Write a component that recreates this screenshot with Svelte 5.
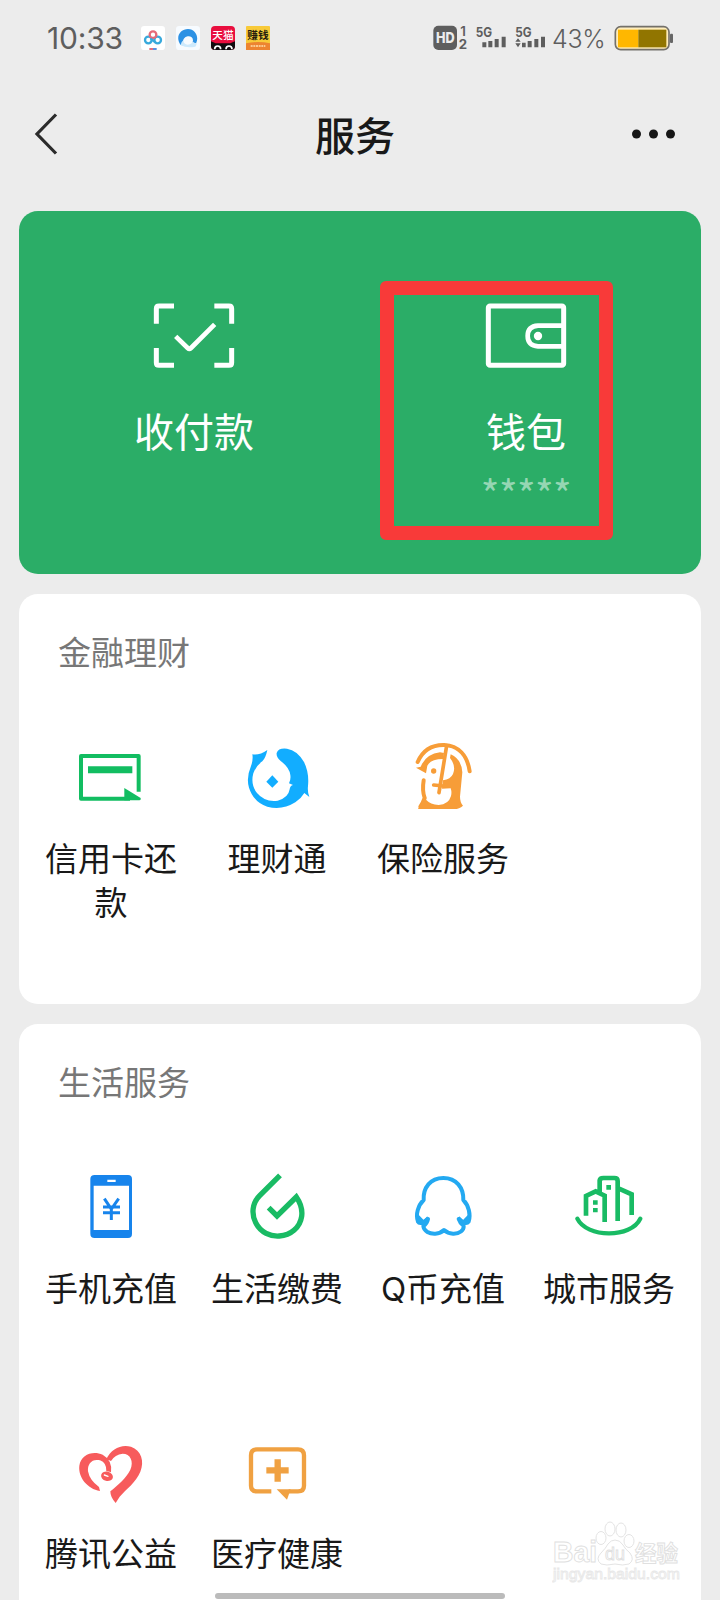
<script>
  const finance = [
    { id: 'card', label: '信用卡还款', box: '135 63 216 216' },
    { id: 'fish', label: '理财通', box: '633 63 216 216' },
    { id: 'insure', label: '保险服务', box: '171 63 216 216' }
  ];
  const life = [
    { id: 'phone', label: '手机充值', box: '135 63 216 216' },
    { id: 'drop', label: '生活缴费', box: '633 63 216 216' },
    { id: 'penguin', label: 'Q币充值', box: '171 63 216 216' },
    { id: 'city', label: '城市服务', box: '669 63 216 216' },
    { id: 'heart', label: '腾讯公益', box: '135 48 216 216' },
    { id: 'medical', label: '医疗健康', box: '633 48 216 216' }
  ];
</script>

{#snippet glyph(item)}
  <svg class="icon" viewBox={item.box} fill="none">
    {#if item.id === 'card'}
      <path d="M326 215V108H153V236H300" stroke="#12bd61" stroke-width="12" stroke-linejoin="round" />
      <path d="M174 139H307V160H174Z" fill="#12bd61" />
      <path d="M283 204L332 234V238Q332 241 328 241H283Z" fill="#12bd61" />
    {:else if item.id === 'fish'}
      <path fill="#12adff" d="M712 90Q688 107 667 103Q670 119 663 138Q648 173 657 203Q671 247 712 260Q756 272 796 247Q813 236 823 219L838 231Q832 217 834 198Q838 158 822 126Q802 91 771 86Q745 83 740 99Q738 111 752 123Q778 142 781 165Q783 178 777 190L789 195Q780 197 779 208Q775 234 743 242Q704 247 681 219Q661 193 670 160Q677 138 697 124Q707 114 712 90Z" />
      <path fill="#12adff" d="M727 166L745 185L727 203L709 185Z" />
    {:else if item.id === 'insure'}
      <path d="M203 126C219 89 247 74 283 75C325 77 352 106 359 154" stroke="#f79d38" stroke-width="12" stroke-linecap="round" />
      <path d="M290 77L267 218" stroke="#f79d38" stroke-width="11" stroke-linecap="round" />
      <path d="M251 195L280 198" stroke="#f79d38" stroke-width="11" stroke-linecap="round" />
      <path d="M221 181Q216 211 224 234Q219 249 211 260" stroke="#f79d38" stroke-width="12" stroke-linecap="round" />
      <circle cx="251" cy="153" r="8" fill="#f79d38" />
      <path fill="#f79d38" d="M198 143L212 140Q228 102 270 97L282 99L279 117Q242 117 232 137L228 160ZM302 103Q335 118 337 157L330 230Q330 247 339 257Q328 267 313 267H204L214 249L228 239Q241 253 266 255Q296 253 303 228Q306 217 302 205L276 206L279 181Q302 178 309 162Q319 138 300 114Z" />
    {:else if item.id === 'phone'}
      <path fill="#1784ec" fill-rule="evenodd" d="M194 75H294Q306 75 306 87V251Q306 264 294 264H194Q181 264 181 251V87Q181 75 194 75ZM191 107V240H297V107ZM232 89V96H257V89Z" />
      <path d="M223 146L244 177L266 146M244 177V210M219 171H270M219 188H270" stroke="#1784ec" stroke-width="9" />
    {:else if item.id === 'drop'}
      <path d="M750 76L689 137C666 160 664 192 677 218C692 248 722 260 748 258C783 256 810 232 815 199Q819 170 799 141L741 198L716 173" stroke="#19bb64" stroke-width="16" />
    {:else if item.id === 'penguin'}
      <path d="M280 84C241 84 219 113 221 150C204 166 196 195 204 215Q208 222 220 217L234 207Q231 221 220 228C221 244 239 252 256 251Q272 250 282 240Q293 250 309 251C329 252 342 240 341 228Q330 220 326 207L339 217Q351 222 356 215C363 195 356 166 340 150C341 113 319 84 280 84Z" stroke="#23a9f1" stroke-width="12" stroke-linejoin="round" />
      <path d="M200 188L203 215Q207 225 223 219L236 213L232 199L221 210ZM360 188L357 215Q353 225 337 219L323 213L328 199L339 210Z" fill="#23a9f1" />
    {:else if item.id === 'city'}
      <path d="M682 206C710 264 843 266 871 206" stroke="#19bb64" stroke-width="13" stroke-linecap="round" />
      <path d="M708 197V138L737 124L764 137V216M749 126V91Q750 84 760 84H793Q803 84 803 93V213M807 116L845 133V195" stroke="#19bb64" stroke-width="14" />
      <path d="M769 105H783V119H769ZM729 151H743V164H729ZM729 174H743V187H729Z" fill="#19bb64" />
    {:else if item.id === 'heart'}
      <path fill="#f75b5c" d="M210 213C172 206 144 172 148 137C153 104 188 91 218 104Q248 121 243 157Q234 153 229 154Q230 128 210 121C186 115 172 131 174 154Q179 181 207 201ZM229 117C244 87 272 72 303 80C334 91 344 124 331 155C318 187 289 207 269 230L257 249Q241 232 241 214C262 196 288 176 301 149C312 124 301 101 278 101Q255 103 243 123Z" />
      <ellipse cx="231" cy="169" rx="18" ry="14" transform="rotate(15 231 169)" fill="#f75b5c" />
      <path d="M223 165L234 169" stroke="#fff" stroke-width="4" stroke-linecap="round" />
    {:else if item.id === 'medical'}
      <path d="M724 214H681Q663 214 663 197V106Q663 88 681 88H804Q822 88 822 106V197Q822 214 804 214H776" stroke="#f0a142" stroke-width="13" />
      <path d="M743 118V185M709 151H776" stroke="#f0a142" stroke-width="19" />
      <path d="M740 208H782L771 239Z" fill="#f0a142" />
    {/if}
  </svg>
{/snippet}

{#snippet section(title, items)}
  <section class="card">
    <h2>{title}</h2>
    <div class="grid">
      {#each items as item}
        <div class="item">
          {@render glyph(item)}
          <span>{item.label}</span>
        </div>
      {/each}
    </div>
  </section>
{/snippet}

<div class="page">
  <div class="status">
    <span class="time">10:33</span>
    <div class="apps">
      <svg width="24" height="24" viewBox="0 0 72 72" fill="none">
        <rect width="72" height="72" rx="10" fill="#fff" />
        <circle cx="22" cy="42" r="10" stroke="#38a9dc" stroke-width="7" />
        <circle cx="50" cy="42" r="10" stroke="#38a9dc" stroke-width="7" />
        <circle cx="36" cy="26" r="10" stroke="#e66a79" stroke-width="7" />
        <path d="M29 38L43 49" stroke="#38a9dc" stroke-width="7" />
        <path d="M25 69H36" stroke="#df5261" stroke-width="5" />
        <path d="M36 69H47" stroke="#377bdd" stroke-width="5" />
      </svg>
      <svg width="24" height="24" viewBox="0 0 72 72">
        <rect width="72" height="72" rx="10" fill="#f7fbff" />
        <path d="M14 57C-4 32 14 9 36 9C58 9 69 32 61 50Q56 54 50 48C54 36 44 29 35 31C22 34 18 46 22 58Z" fill="#2c91e4" />
        <path d="M14 57Q16 47 22 43Q24 60 42 55Q50 52 50 46Q55 54 62 50Q62 60 58 62Q32 68 14 57Z" fill="#cde9fc" />
      </svg>
      <svg width="24" height="24" viewBox="0 0 72 72">
        <rect width="72" height="72" rx="12" fill="#e90e3e" />
        <path d="M0 46L14 52H58L72 46V60Q72 72 60 72H12Q0 72 0 60Z" fill="#100b0e" />
        <path d="M11 70Q11 60 20 60Q29 60 29 70M45 70Q45 60 54 60Q63 60 63 70" fill="none" stroke="#fff" stroke-width="5" />
        <text x="36" y="39" font-size="32" text-anchor="middle" fill="#fff" font-weight="500">天猫</text>
      </svg>
      <svg width="24" height="24" viewBox="0 0 72 72">
        <rect width="72" height="72" rx="3" fill="#f8ca39" />
        <path d="M0 52Q36 44 72 52V72H0Z" fill="#ed8430" />
        <path d="M14 60H58" stroke="#ffe1ae" stroke-width="4" stroke-dasharray="6 2" />
        <text x="36" y="39" font-size="32" text-anchor="middle" fill="#241d0e" font-weight="700">赚钱</text>
      </svg>
    </div>
    <svg class="signals" width="114" height="28" viewBox="36 40 342 84" fill="#5e5e5e">
      <rect x="40" y="45" width="71" height="73" rx="15" />
      <text x="76" y="98" font-size="45" font-weight="800" text-anchor="middle" fill="#ececec" textLength="56" lengthAdjust="spacingAndGlyphs">HD</text>
      <text x="129" y="75" font-size="40" font-weight="600" text-anchor="middle">1</text>
      <text x="129" y="116" font-size="40" font-weight="700" text-anchor="middle" textLength="25" lengthAdjust="spacingAndGlyphs">2</text>
      <text x="167" y="79" font-size="38" font-weight="700" textLength="49" lengthAdjust="spacingAndGlyphs">5G</text>
      <text x="286" y="79" font-size="38" font-weight="700" textLength="49" lengthAdjust="spacingAndGlyphs">5G</text>
      <path d="M187 95h12v15h-12zM205 91h12v19h-12zM224 85h12v25h-12zM245 78h12v32h-12z" />
      <path d="M306 96h11v14h-11zM323 91h12v19h-12zM343 85h12v25h-12zM363 78h12v32h-12zM286 93l8-10 8 10zM286 98h16l-8 12z" />
    </svg>
    <span class="percent">43%</span>
    <svg class="battery" width="60" height="26" viewBox="582 42 180 78">
      <rect x="586" y="47" width="161" height="69" rx="16" fill="#ffedba" stroke="#73706a" stroke-width="5" />
      <path d="M594 56H655V109H594Z" fill="#ffb700" />
      <path d="M655 56H739V109H655Z" fill="#917500" />
      <rect x="750" y="68" width="9" height="28" rx="3" fill="#666" />
    </svg>
  </div>

  <header>
    <svg width="26" height="44" viewBox="0 0 26 44" fill="none">
      <path d="M24 2.500L5 22L24 41.500" stroke="#2b2b2b" stroke-width="3.200" />
    </svg>
    <h1>服务</h1>
    <svg width="46" height="12" viewBox="0 0 46 12" fill="#161616">
      <circle cx="6.500" cy="6" r="4.500" /><circle cx="23.500" cy="6" r="4.500" /><circle cx="40.500" cy="6" r="4.500" />
    </svg>
  </header>

  <div class="hero">
    <div class="pay">
      <svg width="84" height="68" viewBox="155 95 252 204" fill="none" stroke="#fff" stroke-width="15">
        <path d="M221 107H176Q168 107 168 115V160M342 107H386Q394 107 394 115V160M168 233V277Q168 285 176 285H221M394 233V277Q394 285 386 285H342" />
        <path d="M226 198L262 233Q267 238 272 233L343 162" stroke-width="14" />
      </svg>
      <span>收付款</span>
    </div>
    <div class="pay">
      <svg width="84" height="68" viewBox="341 95 252 204" fill="none" stroke="#fff" stroke-width="15">
        <rect x="354" y="107" width="226" height="178" rx="5" />
        <path d="M580 166H503Q472 168 472 197Q472 226 503 228H580" stroke-width="14" />
        <circle cx="503" cy="197" r="12.500" fill="#fff" stroke="none" />
      </svg>
      <span>钱包</span>
      <small>*****</small>
    </div>
    <div class="highlight"></div>
  </div>

  {@render section('金融理财', finance)}
  {@render section('生活服务', life)}

  <svg class="watermark" width="140" height="70" viewBox="0 0 140 70" fill="#fff" stroke="#e0e0e0" stroke-width="0.900">
    <text x="1" y="41" font-size="29" font-weight="700" textLength="44" lengthAdjust="spacingAndGlyphs">Bai</text>
    <path d="M63 19Q68 19 71 24Q73 28 78 32Q83 39 77 43Q71 45 63 43Q54 45 49 43Q43 38 49 32Q54 27 56 23Q59 19 63 19Z" />
    <ellipse cx="49" cy="17" rx="5" ry="6.500" />
    <ellipse cx="58" cy="8" rx="5" ry="7" />
    <ellipse cx="69" cy="9" rx="5" ry="7" />
    <ellipse cx="77" cy="20" rx="5" ry="6.500" />
    <text x="63" y="39" font-size="19" text-anchor="middle" textLength="20" lengthAdjust="spacingAndGlyphs">du</text>
    <text x="83" y="40" font-size="22" font-weight="700" textLength="43" lengthAdjust="spacingAndGlyphs">经验</text>
    <text x="1" y="58" font-size="15.500" textLength="127" lengthAdjust="spacingAndGlyphs" stroke="#e8e8e8">jingyan.baidu.com</text>
  </svg>
  <div class="home"></div>
</div>

<style>
  :global(body) {
    margin: 0;
    background: #ececec;
  }
  .page {
    position: relative;
    box-sizing: border-box;
    width: 720px;
    height: 1600px;
    overflow: hidden;
    padding: 0 19px;
    background: #ececec;
    color: #191919;
    font-family: Inter, 'Noto Sans CJK SC', sans-serif;
  }
  svg {
    display: block;
    flex: none;
  }
  .status {
    display: flex;
    align-items: center;
    height: 75px;
    padding-left: 28px;
    color: #5e5e5e;
  }
  .time {
    width: 94px;
    font-size: 30px;
    line-height: 40px;
    letter-spacing: -0.2px;
  }
  .apps {
    display: flex;
    gap: 11px;
  }
  .signals {
    margin-left: 162px;
  }
  .percent {
    width: 62px;
    margin: 3px 0 0 6px;
    font-size: 25px;
    font-weight: 300;
    line-height: 30px;
    letter-spacing: -0.3px;
  }
  header {
    display: flex;
    align-items: center;
    justify-content: space-between;
    height: 118px;
    padding: 0 25px 0 13px;
    box-sizing: border-box;
    margin-bottom: 18px;
  }
  h1 {
    margin: 5px 0 0 22px;
    font-size: 40px;
    font-weight: 500;
    line-height: 50px;
  }
  .hero {
    position: relative;
    display: grid;
    grid-template-columns: 1fr 1fr;
    height: 363px;
    padding: 0 9px;
    border-radius: 19px;
    background: #2bad67;
    color: #fff;
  }
  .pay {
    display: flex;
    flex-direction: column;
    align-items: center;
    padding-top: 91px;
  }
  .pay span {
    margin-top: 35px;
    font-size: 40px;
    line-height: 56px;
  }
  .pay small {
    margin-top: 12px;
    font-family: 'Noto Sans CJK SC', sans-serif;
    font-size: 40px;
    line-height: 40px;
    letter-spacing: -0.6px;
    color: #95d6b3;
  }
  .highlight {
    position: absolute;
    left: 361px;
    top: 70px;
    box-sizing: border-box;
    width: 233px;
    height: 259px;
    border: 14px solid #f83a39;
    border-radius: 6px;
  }
  .card {
    box-sizing: border-box;
    height: 410px;
    margin-top: 20px;
    padding: 0 9px;
    border-radius: 19px;
    background: #fff;
  }
  .card:nth-of-type(2) {
    height: 640px;
  }
  h2 {
    box-sizing: border-box;
    height: 147px;
    margin: 0;
    padding: 35px 30px 0;
    color: #777;
    font-size: 33px;
    font-weight: 400;
    line-height: 48px;
  }
  .grid {
    display: grid;
    grid-template-columns: repeat(4, 1fr);
    grid-auto-rows: 265px;
  }
  .item {
    display: flex;
    flex-direction: column;
    align-items: center;
    gap: 25px;
    text-align: center;
  }
  .item span {
    width: 140px;
    font-size: 33px;
    line-height: 43.500px;
  }
  .icon {
    width: 72px;
    height: 72px;
  }
  .watermark {
    position: absolute;
    left: 552px;
    top: 1521px;
    font-family: 'Liberation Sans', 'Noto Sans CJK SC', sans-serif;
  }
  .home {
    position: absolute;
    left: 215px;
    top: 1593px;
    width: 290px;
    height: 6px;
    border-radius: 3px;
    background: #bbb;
  }
</style>
